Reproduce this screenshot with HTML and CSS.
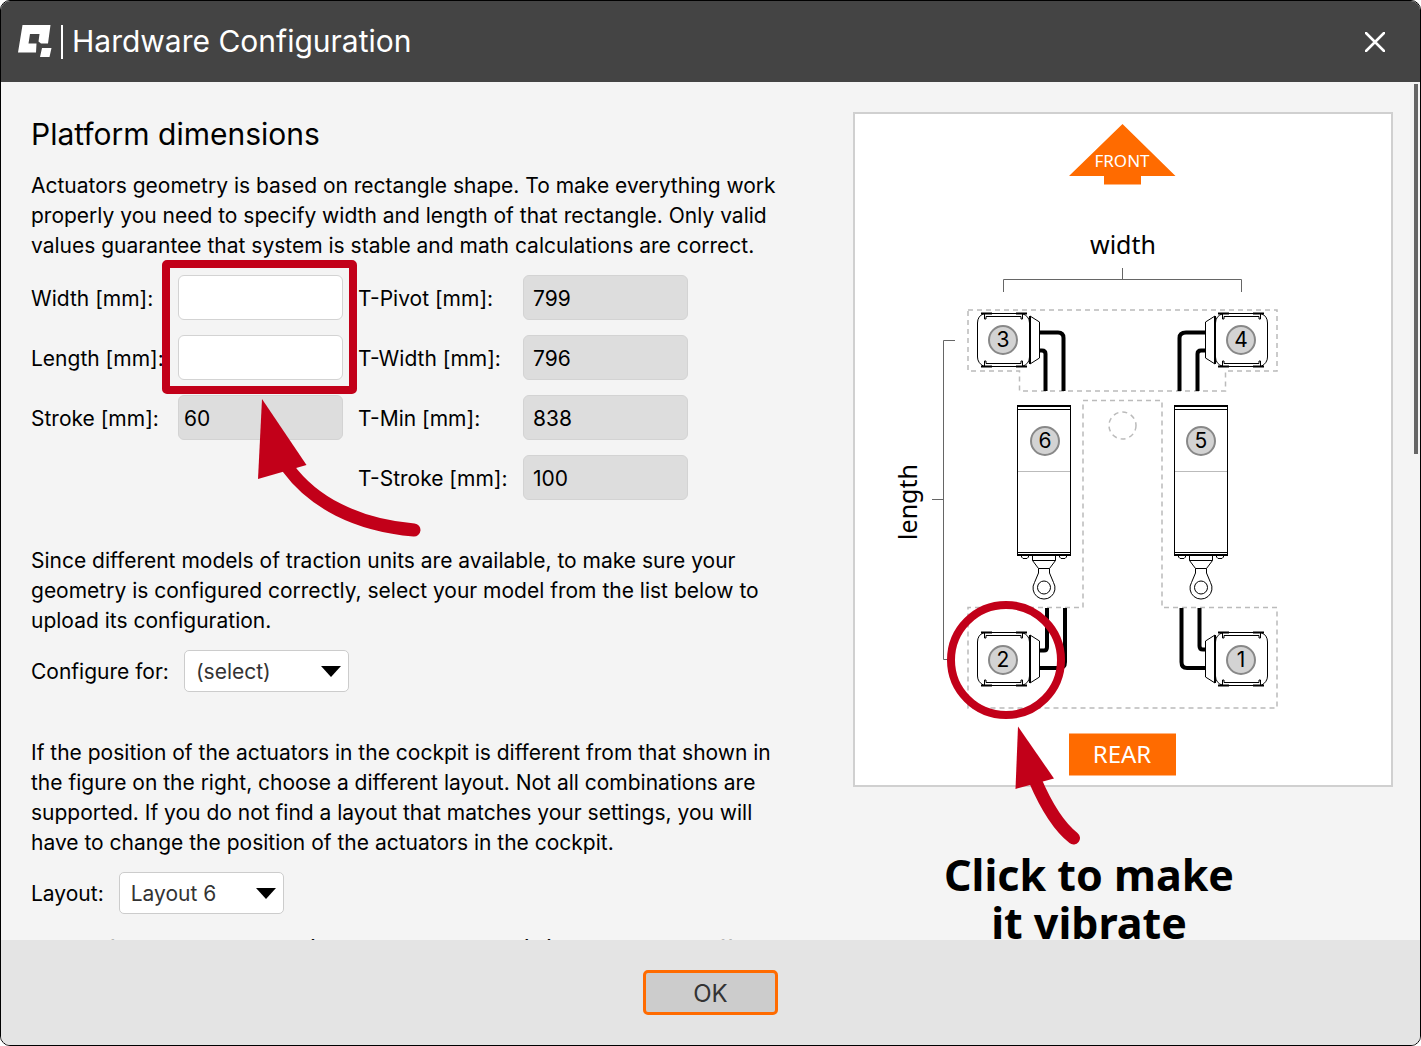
FILE: index.html
```html
<!DOCTYPE html>
<html lang="en">
<head>
<meta charset="utf-8">
<title>Hardware Configuration</title>
<link rel="stylesheet" href="styles.css">
</head>
<body>
<div class="dialog" role="dialog" aria-labelledby="dialog-title">
  <header class="titlebar">
    <svg class="logo" viewBox="18 25 34 33" aria-hidden="true">
      <path fill="#fff" fill-rule="evenodd" d="M22.500 25H50.500L48 43.500H41L38.500 41.500L39.500 34H30L28.500 43.500H36.500L36 52.500H18ZM42 48H51.500L49.500 57H40Z"/>
    </svg>
    <span class="divider"></span>
    <h1 class="title" id="dialog-title">Hardware Configuration</h1>
    <button class="close" type="button" aria-label="Close">
      <svg viewBox="0 0 20 20" aria-hidden="true"><path d="M1 1L19 19M19 1L1 19"/></svg>
    </button>
  </header>

  <main class="content">
    <section class="settings">
      <h2 class="heading">Platform dimensions</h2>
      <p class="text">Actuators geometry is based on rectangle shape. To make everything work properly you need to specify width and length of that rectangle. Only valid values guarantee that system is stable and math calculations are correct.</p>

      <form class="fields">
        <label for="width">Width [mm]:</label>
        <input class="field" id="width" type="text">
        <label for="pivot">T-Pivot [mm]:</label>
        <input class="field field-locked" id="pivot" type="text" value="799" readonly>
        <label for="length">Length [mm]:</label>
        <input class="field" id="length" type="text">
        <label for="twidth">T-Width [mm]:</label>
        <input class="field field-locked" id="twidth" type="text" value="796" readonly>
        <label for="stroke">Stroke [mm]:</label>
        <input class="field field-locked field-tight" id="stroke" type="text" value="60" readonly>
        <label for="tmin">T-Min [mm]:</label>
        <input class="field field-locked" id="tmin" type="text" value="838" readonly>
        <label class="third" for="tstroke">T-Stroke [mm]:</label>
        <input class="field field-locked" id="tstroke" type="text" value="100" readonly>
        <svg class="marks marks-fields" viewBox="160 258 264 282" aria-hidden="true">
          <rect class="mark-line" x="166" y="264" width="187" height="126" rx="1" stroke-width="8"/>
          <path class="mark-line" stroke-width="13" d="M288 468C313 502 356 525 414 530"/>
          <path class="mark-fill" d="M262 399L306.500 465L258 479Z"/>
        </svg>
      </form>

      <p class="text">Since different models of traction units are available, to make sure your geometry is configured correctly, select your model from the list below to upload its configuration.</p>
      <div class="choice">
        <label for="model">Configure for:</label>
        <span class="picker">
          <select id="model"><option>(select)</option></select>
          <svg viewBox="0 0 20 11" aria-hidden="true"><path d="M0 0H20L10 11Z"/></svg>
        </span>
      </div>

      <p class="text">If the position of the actuators in the cockpit is different from that shown in the figure on the right, choose a different layout. Not all combinations are supported. If you do not find a layout that matches your settings, you will have to change the position of the actuators in the cockpit.</p>
      <div class="choice choice-last">
        <label for="layout">Layout:</label>
        <span class="picker">
          <select id="layout"><option>Layout 6</option></select>
          <svg viewBox="0 0 20 11" aria-hidden="true"><path d="M0 0H20L10 11Z"/></svg>
        </span>
      </div>
      <p class="text note">NOTE: If you can see a previous or any message is in use, see Manoff</p>
    </section>

    <aside class="preview">
      <div class="figure">
        <svg class="diagram" viewBox="855 114 536 671" role="img" aria-label="Actuator layout">
          <defs>
            <g id="actuator" fill="none" stroke="#000">
              <path fill="#fff" d="M984 313.500H1022Q1029.500 316 1029.500 323V357Q1029.500 364 1022 366.500H984Q977.500 363 977.500 357V323Q977.500 316 984 313.500Z"/>
              <path stroke-width="2" d="M981 313.500H992M1016 313.500H1027M981 366.500H992M1016 366.500H1027M1030 316V364"/>
              <path d="M984.500 314V319H986V316.500H1021V319H1022.500V314M984.500 366V361H986V363.500H1021V361H1022.500V366M1030 316L1039.500 322V358L1030 364"/>
            </g>
            <g id="cylinder" fill="none" stroke="#000">
              <path d="M1017.500 405.500H1070.500V555.500H1017.500ZM1017 409.500H1071M1017 552.500H1071"/>
              <path stroke-width="2" d="M1017 406H1071M1017 555H1071"/>
              <path stroke="#bbb" d="M1018 471.500H1070"/>
              <path d="M1021.500 556V557L1023 558.500H1027L1028.500 557V556M1059.500 556V557L1061 558.500H1065L1066.500 557V556"/>
              <path d="M1032.500 556V560.500H1055.500V556M1032.500 560.500L1038.500 568.500H1049.500L1055.500 560.500M1038.500 568.500V573L1034.500 582.500A11 11 0 1 0 1053.500 582.500L1049.500 573V568.500"/>
              <circle cx="1044" cy="587.500" r="6.500"/>
            </g>
          </defs>
          <path fill="#ff6b00" d="M1122.500 124L1175.500 176H1141V184.500H1104V176H1069Z"/>
          <text class="sign sign-front" x="1122" y="167">FRONT</text>
          <text class="axis" x="1123" y="254">width</text>
          <text class="axis" transform="translate(917 502) rotate(-90)">length</text>
          <path class="bracket" d="M1003.500 292V279.500H1241.500V292M1122.500 268V279M955 340.500H943.500V659.500H955M932 499.500H943"/>
          <path class="zone" d="M968 310H1277V371H1225.500V391H1019.500V371H968Z"/>
          <path class="zone" d="M1083 607.500V400.500H1162V607.500H1277V708H968V607.500Z"/>
          <circle class="zone" cx="1122.500" cy="425.500" r="13.500"/>
          <path class="cable" d="M1039 332.500H1058Q1063.500 332.500 1063.500 338V391M1039 350.500H1042Q1045.500 350.500 1045.500 354V391M1205 332.500H1186Q1179.500 332.500 1179.500 338V391M1205 350.500H1201Q1197.500 350.500 1197.500 354V391"/>
          <path class="cable" d="M1047 608V647Q1047 650.500 1044 650.500H1039M1065 608V662Q1065 668 1059 668H1039M1181.500 608V662Q1181.500 668 1187 668H1205M1199.500 608V646Q1199.500 649.500 1203 649.500H1205"/>
          <use href="#actuator"/>
          <use href="#actuator" y="319"/>
          <use href="#actuator" transform="matrix(-1 0 0 1 2245 0)"/>
          <use href="#actuator" transform="matrix(-1 0 0 1 2245 319)"/>
          <use href="#cylinder"/>
          <use href="#cylinder" x="157"/>
          <rect fill="#ff6b00" x="1069" y="733.500" width="107" height="42"/>
          <text class="sign sign-rear" x="1122" y="763">REAR</text>
        </svg>
        <button class="unit unit-1" type="button">1</button>
        <button class="unit unit-2" type="button">2</button>
        <button class="unit unit-3" type="button">3</button>
        <button class="unit unit-4" type="button">4</button>
        <button class="unit unit-5" type="button">5</button>
        <button class="unit unit-6" type="button">6</button>
        <svg class="marks marks-unit" viewBox="945 599 136 250" aria-hidden="true">
          <circle class="mark-line" cx="1006" cy="660" r="55" stroke-width="8"/>
          <path class="mark-line" stroke-width="13" d="M1035 780Q1053 822 1073.500 838"/>
          <path class="mark-fill" d="M1018 726.500L1054 778.500L1015.500 789Z"/>
        </svg>
      </div>
      <p class="callout">Click to make<br>it vibrate</p>
    </aside>
    <span class="scroll-thumb"></span>
  </main>

  <footer class="actions">
    <button class="ok" type="button">OK</button>
  </footer>
</div>
</body>
</html>
```
FILE: styles.css
```css
* {
  box-sizing: border-box;
}

body {
  margin: 0;
  background: #fff;
  color: #000;
  font: 21px/30px Inter, "Liberation Sans", sans-serif;
}

h1, h2, p, form {
  margin: 0;
  font-weight: 400;
}

button, input, select {
  font: inherit;
  color: inherit;
}

.dialog {
  display: flex;
  flex-direction: column;
  height: 100vh;
  overflow: hidden;
  border: 1px solid #000;
  border-radius: 10px;
  background: #f4f4f4;
}

.titlebar {
  display: flex;
  flex: none;
  align-items: center;
  height: 81px;
  padding: 0 35px 0 17px;
  background: #444;
  color: #fff;
}

.logo {
  width: 34px;
  height: 33px;
}

.divider {
  width: 2px;
  height: 34px;
  margin: 0 9px;
  background: #fff;
}

.title {
  flex: 1;
  padding-bottom: 2px;
  font-size: 30px;
  line-height: 40px;
}

.close {
  display: flex;
  padding: 0;
  border: 0;
  background: none;
}

.close svg {
  width: 20px;
  height: 20px;
  fill: none;
  stroke: #fff;
  stroke-width: 2.500;
  stroke-linecap: round;
}

.content {
  position: relative;
  display: flex;
  flex: 1;
  gap: 72px;
  align-items: flex-start;
  min-height: 0;
  overflow: hidden;
  padding: 30px 27px 0 30px;
}

.settings {
  flex: 1;
  min-width: 0;
}

.heading {
  margin-bottom: 14px;
  font-size: 30px;
  line-height: 45px;
}

.fields {
  position: relative;
  display: grid;
  grid-template-columns: 132px 165px 150px 165px;
  gap: 15px;
  align-items: center;
  margin: 14px 0 46px;
}

.fields label {
  padding-top: 2px;
  white-space: nowrap;
}

.third {
  grid-column: 3;
}

.field {
  width: 100%;
  height: 45px;
  padding: 2px 9px 0;
  border: 1px solid #d3d3d3;
  border-radius: 6px;
  background: #fff;
}

.field-locked {
  background: #ddd;
}

.field-tight {
  padding: 2px 5px 0;
}

.choice {
  display: flex;
  gap: 15px;
  align-items: center;
  margin: 14px 0 46px;
}

.choice label {
  padding-top: 2px;
}

.choice-last {
  margin-bottom: 20px;
}

.picker {
  position: relative;
}

.picker select {
  display: block;
  width: 165px;
  height: 42px;
  padding: 2px 11px 0;
  border: 1px solid #ccc;
  border-radius: 5px;
  background: #fff;
  color: #333;
  appearance: none;
}

.picker svg {
  position: absolute;
  top: 16px;
  right: 8px;
  width: 20px;
  height: 11px;
  pointer-events: none;
}

.note {
  font-weight: 600;
  white-space: nowrap;
}

.preview {
  flex: none;
  width: 540px;
}

.figure {
  position: relative;
  border: 2px solid #d0d0d0;
  background: #fff;
}

.diagram {
  display: block;
  width: 100%;
}

.sign, .axis {
  font-family: "Noto Sans", sans-serif;
  text-anchor: middle;
}

.sign {
  fill: #fff;
}

.sign-front {
  font-size: 17px;
}

.sign-rear {
  font-size: 24px;
}

.axis {
  font-size: 25px;
}

.bracket {
  fill: none;
  stroke: #666;
}

.zone {
  fill: none;
  stroke: #bbb;
  stroke-width: 1.500;
  stroke-dasharray: 5 4;
}

.cable {
  fill: none;
  stroke: #000;
  stroke-width: 4;
}

.unit {
  position: absolute;
  width: 30px;
  height: 30px;
  padding: 0;
  border: 2px solid #888;
  border-radius: 50%;
  background: #d3d3d3;
  line-height: 26px;
}

.unit-1 { left: 371px; top: 531px; }
.unit-2 { left: 133px; top: 531px; }
.unit-3 { left: 133px; top: 211px; }
.unit-4 { left: 371px; top: 211px; }
.unit-5 { left: 331px; top: 312px; }
.unit-6 { left: 175px; top: 312px; }

.marks {
  position: absolute;
  pointer-events: none;
}

.marks-fields {
  left: 129px;
  top: -17px;
  width: 264px;
  height: 282px;
}

.marks-unit {
  left: 90px;
  top: 485px;
  width: 136px;
  height: 250px;
}

.mark-line {
  fill: none;
  stroke: #c20019;
  stroke-linecap: round;
  stroke-linejoin: round;
}

.mark-fill {
  fill: #c20019;
}

.callout {
  padding: 64px 68px 0 0;
  font: 700 43px/48px "Noto Sans", sans-serif;
  text-align: center;
}

.scroll-thumb {
  position: absolute;
  top: 2px;
  right: 2px;
  width: 4px;
  height: 370px;
  background: #666;
}

.actions {
  display: flex;
  flex: none;
  justify-content: center;
  height: 105px;
  padding-top: 30px;
  background: #e4e4e4;
}

.ok {
  width: 135px;
  height: 45px;
  padding: 2px 0 0;
  border: 3px solid #ff6b00;
  border-radius: 5px;
  background: #ccc;
  color: #333;
  font-size: 24px;
}
```
